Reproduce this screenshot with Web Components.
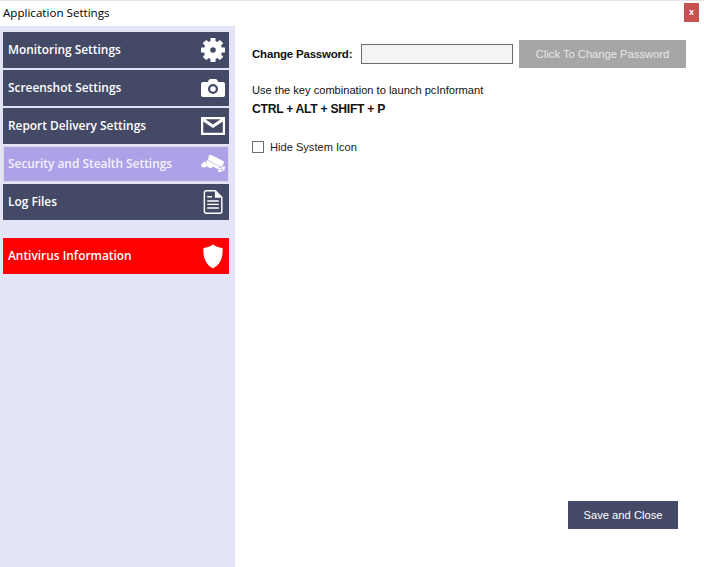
<!DOCTYPE html>
<html>
<head>
<meta charset="utf-8">
<title>Application Settings</title>
<style>
  html, body { margin: 0; height: 100%; background: #fff; overflow: hidden; }
  body { font-family: "Liberation Sans", Arial, sans-serif; font-size: 11px; color: #000; }
</style>
</head>
<body>
<settings-window></settings-window>

<script>
const gearTeeth = [0, 45, 90, 135, 180, 225, 270, 315]
  .map((a) => `<rect x="9.500" y="0" width="5" height="5" rx=".6" transform="rotate(${a} 12 12)"/>`)
  .join('');

const ICONS = {
  gear: `<svg width="24" height="24" viewBox="0 0 24 24"><g fill="#fff">${gearTeeth}</g><circle cx="12" cy="12" r="6" fill="none" stroke="#fff" stroke-width="6.400"/></svg>`,
  camera: `<svg width="24" height="18" viewBox="0 0 24 18"><path fill="#fff" fill-rule="evenodd" d="M7.500 1.500q.5-1.500 2-1.500h5q1.500 0 2 1.500l.7 1.500h4.800q2 0 2 2v11q0 2-2 2h-20q-2 0-2-2v-11q0-2 2-2h4.800zM12 5a5 5 0 1 0 0 10 5 5 0 0 0 0-10zm0 2.200a2.800 2.800 0 1 1 0 5.600 2.800 2.800 0 0 1 0-5.600z"/></svg>`,
  mail: `<svg width="24" height="18" viewBox="0 0 24 18"><path fill="#fff" fill-rule="evenodd" d="M0 0h24v18h-24zM4.500 2.200l7.500 5.300 7.500-5.300zM2.200 4.500v11.300h19.600v-11.300l-9.800 6.500z"/></svg>`,
  cctv: `<svg width="24" height="18" viewBox="0 0 24 18"><g fill="#fff"><path d="M8 .2l2.500-.2 12.500 6.500-1 4-2.500 1.200-12.500-7z"/><path d="M5.500 6l1-1 12 6.800-1.500 2.200-1.500-.5-3.500-2-2 1.800-3.500-1.200-1-3z"/><path d="M0 10.500q.5-2.500 3-3.500l2-.5 1 4.500-2 1.500-3-.5z"/><path fill-rule="evenodd" d="M17.500 13.500l6-2.500.5.500-.5 3.500-5.500 2.500-1-1zM19 14.500v1l3-1.200v-1z"/></g></svg>`,
  doc: `<svg width="20" height="24" viewBox="0 0 20 25"><path fill="none" stroke="#fff" stroke-width="1.500" d="M3 .8h9.500l6.700 6.700v14.700q0 2-2 2h-14.200q-2 0-2-2v-19.400q0-2 2-2z"/><path fill="#fff" d="M12 .8l7.200 7.200h-7.200z"/><path stroke="#fff" stroke-width="1.500" d="M4 7h5M4 11.500h12M4 15h12M4 18.800h12"/></svg>`,
  shield: `<svg width="20" height="25" viewBox="0 0 21 25"><path fill="#fff" d="M10.500 0c2.500 2 6 3.300 10 3.500.6 9-1.500 17-10 21.500-8.500-4.500-10.600-12.500-10-21.500 4-.2 7.500-1.500 10-3.500z"/></svg>`
};

// one row of the left menu, the label is slotted and the icon picked by name
class NavButton extends HTMLElement {
  constructor() {
    super();
    this.attachShadow({ mode: 'open' });
  }

  connectedCallback() {
    const icon = ICONS[this.getAttribute('icon')] || '';
    this.shadowRoot.innerHTML = `
      <style>
        :host {
          display: flex;
          align-items: center;
          justify-content: space-between;
          box-sizing: border-box;
          width: 226px;
          height: 36px;
          padding: 0 3px 0 5px;
          background: #444a66;
          color: #fff;
          font: 600 11.9px "Open Sans", "Noto Sans", sans-serif;
        }
        :host([active]) {
          background: #afa1e8;
          border: 1px solid #dcdcdc;
          padding: 0 2px 0 4px;
          color: #f4f1ff;
        }
        :host([danger]) { background: #ff0000; }
        .label { position: relative; top: -1px; }
        .icon { display: flex; align-items: center; justify-content: center; width: 26px; }
        svg { display: block; }
      </style>
      <span class="label"><slot></slot></span>
      <span class="icon">${icon}</span>
    `;
  }
}

class SideNav extends HTMLElement {
  constructor() {
    super();
    this.attachShadow({ mode: 'open' });
    this.shadowRoot.innerHTML = `
      <style>
        :host {
          display: flex;
          flex-direction: column;
          gap: 2px;
          box-sizing: border-box;
          width: 235px;
          padding: 6px 0 0 3px;
          background: #e4e4f8;
        }
      </style>
      <slot></slot>
    `;
  }
}

class TitleBar extends HTMLElement {
  constructor() {
    super();
    this.attachShadow({ mode: 'open' });
    this.shadowRoot.innerHTML = `
      <style>
        :host {
          display: flex;
          align-items: flex-start;
          justify-content: space-between;
          box-sizing: border-box;
          height: 26px;
          padding: 0 3px 0 3px;
          background: #fff;
          border-top: 1px solid #e6e6e6;
          font: 11.6px "Open Sans", "Noto Sans", sans-serif;
          color: #000;
        }
        .title { margin-top: 4px; }
        .close {
          width: 15px;
          height: 19px;
          margin: 2px 2px 0 0;
          background: #c75050;
          color: #fff;
          font: bold 9px/18px "Liberation Sans", sans-serif;
          text-align: center;
        }
      </style>
      <span class="title"><slot></slot></span>
      <span class="close">x</span>
    `;
  }
}

class FlatButton extends HTMLElement {
  constructor() {
    super();
    this.attachShadow({ mode: 'open' });
    this.shadowRoot.innerHTML = `
      <style>
        :host {
          display: flex;
          align-items: center;
          justify-content: center;
          box-sizing: border-box;
          height: 28px;
          background: #444a66;
          color: #fff;
          font: 11.2px "Liberation Sans", sans-serif;
        }
        :host([disabled]) { background: #a6a6a6; color: #e6e6e6; }
      </style>
      <slot></slot>
    `;
  }
}

class SecurityPanel extends HTMLElement {
  constructor() {
    super();
    this.attachShadow({ mode: 'open' });
    this.shadowRoot.innerHTML = `
      <style>
        :host {
          display: flex;
          flex-direction: column;
          flex: 1;
          box-sizing: border-box;
          padding: 14px 18px 38px 17px;
          font: 11.1px "Liberation Sans", sans-serif;
          color: #111;
        }
        .password { display: flex; align-items: center; }
        .password b { width: 109px; font-size: 11.5px; letter-spacing: -0.2px; }
        .field {
          box-sizing: border-box;
          width: 152px;
          height: 20px;
          margin-right: 6px;
          background: #f4f4f4;
          border: 1px solid #6d6d6d;
        }
        .password flat-button { width: 167px; }
        .hint { margin-top: 15px; line-height: 14px; }
        .keys { margin-top: 5px; font-size: 12.2px; font-weight: bold; line-height: 15px; letter-spacing: -0.3px; }
        .check { display: flex; align-items: center; margin-top: 24px; color: #222; }
        .box {
          box-sizing: border-box;
          width: 12px;
          height: 12px;
          margin-right: 6px;
          background: #fff;
          border: 1px solid #6f6f6f;
        }
        .footer { display: flex; justify-content: flex-end; margin-top: auto; padding-right: 8px; }
        .footer flat-button { width: 110px; }
      </style>
      <div class="password">
        <b>Change Password:</b>
        <div class="field"></div>
        <flat-button disabled>Click To Change Password</flat-button>
      </div>
      <div class="hint">Use the key combination to launch pcInformant</div>
      <div class="keys">CTRL + ALT + SHIFT + P</div>
      <div class="check"><span class="box"></span>Hide System Icon</div>
      <div class="footer"><flat-button>Save and Close</flat-button></div>
    `;
  }
}

class SettingsWindow extends HTMLElement {
  constructor() {
    super();
    this.attachShadow({ mode: 'open' });
    this.shadowRoot.innerHTML = `
      <style>
        :host { display: flex; flex-direction: column; height: 100vh; background: #fff; }
        .main { display: flex; flex: 1; min-height: 0; }
        .gap { height: 14px; }
      </style>
      <title-bar>Application Settings</title-bar>
      <div class="main">
        <side-nav>
          <nav-button icon="gear">Monitoring Settings</nav-button>
          <nav-button icon="camera">Screenshot Settings</nav-button>
          <nav-button icon="mail">Report Delivery Settings</nav-button>
          <nav-button icon="cctv" active>Security and Stealth Settings</nav-button>
          <nav-button icon="doc">Log Files</nav-button>
          <div class="gap"></div>
          <nav-button icon="shield" danger>Antivirus Information</nav-button>
        </side-nav>
        <security-panel></security-panel>
      </div>
    `;
  }
}

customElements.define('nav-button', NavButton);
customElements.define('side-nav', SideNav);
customElements.define('title-bar', TitleBar);
customElements.define('flat-button', FlatButton);
customElements.define('security-panel', SecurityPanel);
customElements.define('settings-window', SettingsWindow);
</script>
</body>
</html>
